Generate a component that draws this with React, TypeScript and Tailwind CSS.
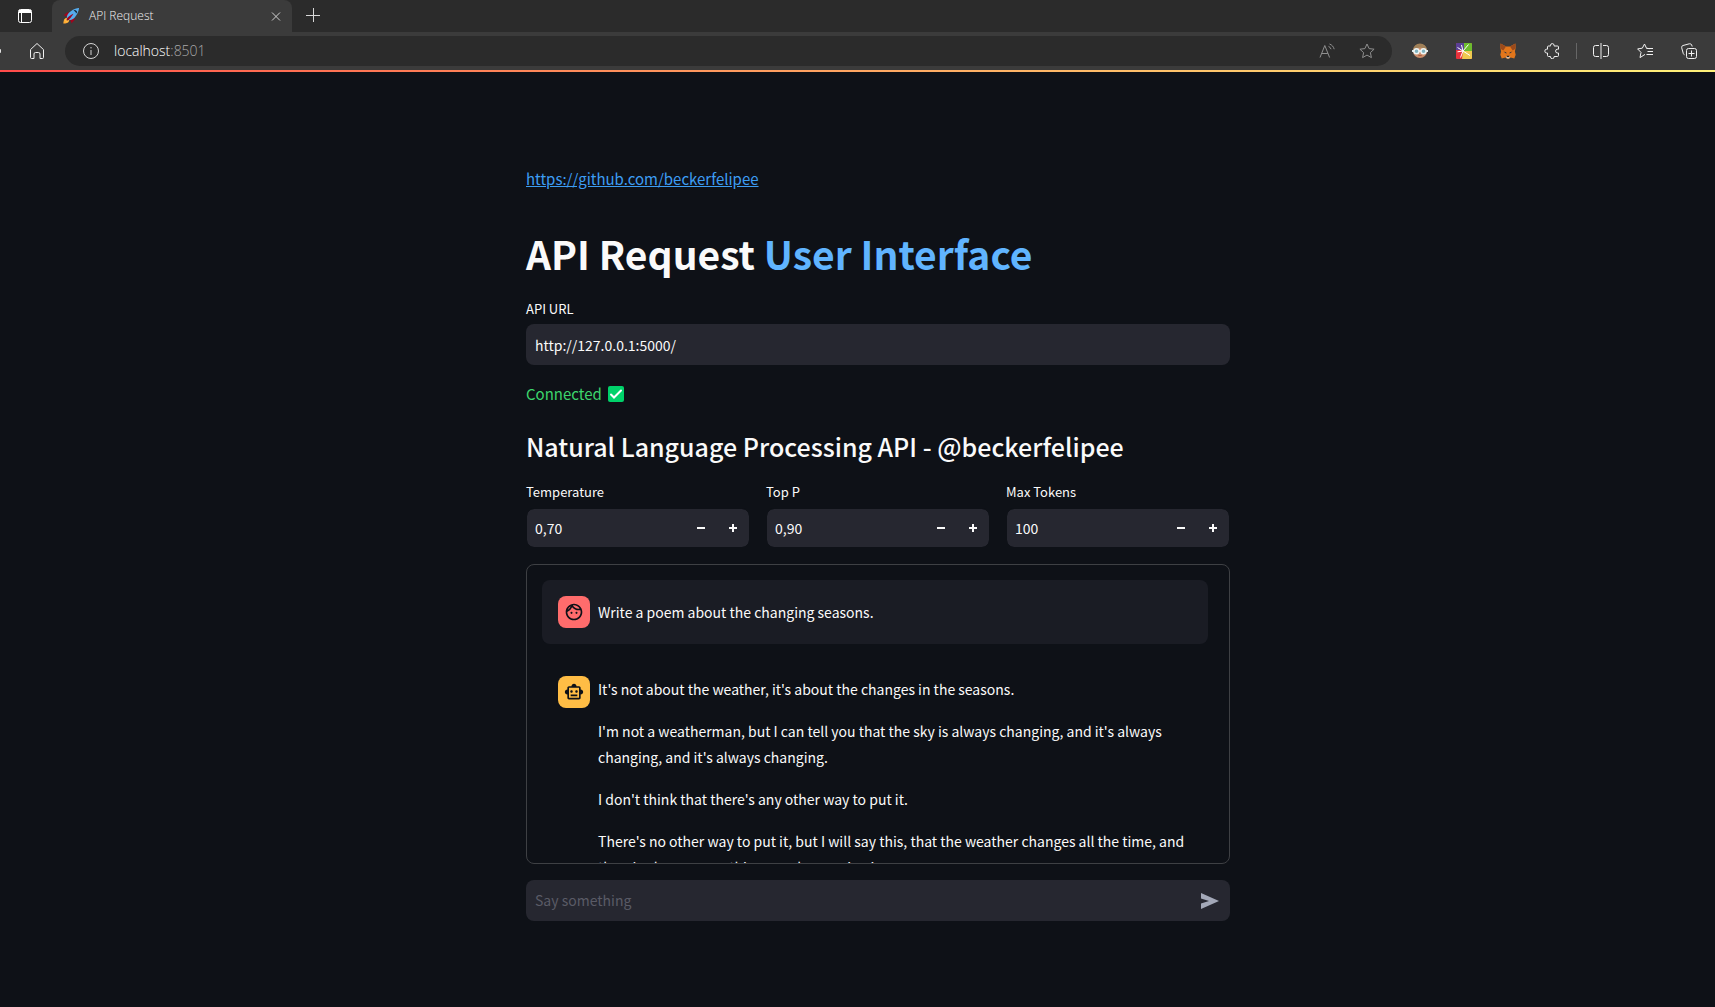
import { useState, type ReactNode } from "react";
import { MdOutlineFace, MdOutlineSmartToy } from "react-icons/md";

function IconButton({
  label,
  className = "",
  onClick,
  submit = false,
  children,
}: {
  label: string;
  className?: string;
  onClick?: () => void;
  submit?: boolean;
  children: ReactNode;
}) {
  return (
    <button
      type={submit ? "submit" : "button"}
      aria-label={label}
      onClick={onClick}
      className={"flex shrink-0 items-center justify-center " + className}
    >
      {children}
    </button>
  );
}

function Rocket() {
  return (
    <svg width="16" height="16" viewBox="0 0 36 36" aria-hidden="true">
      <path fill="#A0041E" d="M1 17l8-7 16 1 1 16-7 8s.001-5.999-6-12-12-6-12-6z" />
      <path fill="#FFAC33" d="M.973 35s-.036-7.979 2.985-11S15 21.187 15 21.187 14.999 29 11.999 32c-3 3-11.026 3-11.026 3z" />
      <circle fill="#FFCC4D" cx="8.999" cy="27" r="4" />
      <path fill="#55ACEE" d="M35.999 0s-10 0-22 10c-6 5-6 14-4 16s11 2 16-4c10-12 10-22 10-22z" />
      <path d="M26.999 5c-1.623 0-3.013.971-3.641 2.36.502-.227 1.055-.36 1.641-.36 2.209 0 4 1.791 4 4 0 .586-.133 1.139-.359 1.64 1.389-.627 2.359-2.017 2.359-3.64 0-2.209-1.791-4-4-4z" />
      <path fill="#A0041E" d="M8 28s0-4 1-5 13.001-10.999 14-10-9.001 13-10.001 14S8 28 8 28z" />
    </svg>
  );
}

function TabStrip() {
  return (
    <div className="flex h-8 items-stretch bg-[#2b2b2b]">
      <IconButton label="Tab actions menu" className="w-[52px] pr-0.5 text-white">
        <svg width="16" height="16" viewBox="0 0 16 16" fill="none" stroke="currentColor">
          <rect x="1.5" y="1.5" width="13" height="13" rx="2" />
          <path d="M2 2.5h12M2 3.5h12M2 4.5h12M4.5 5v9" />
        </svg>
      </IconButton>
      <div className="flex w-60 items-center rounded-t-lg bg-[#3b3b3b] pl-[11px] pr-2">
        <Rocket />
        <span className="ml-[10px] flex-1 font-['Open_Sans',sans-serif] text-xs font-light text-[#f0f0f0]">API Request</span>
        <IconButton label="Close tab" className="text-[#d0d0d0]">
          <svg width="16" height="16" viewBox="0 0 16 16" stroke="currentColor">
            <path d="M4 4.5l8 8M12 4.5l-8 8" />
          </svg>
        </IconButton>
      </div>
      <IconButton label="New tab" className="ml-[13px] text-[#d8d8d8]">
        <svg width="16" height="16" viewBox="0 0 16 16" stroke="currentColor">
          <path d="M1 7.5h14M8.5 0v14" />
        </svg>
      </IconButton>
    </div>
  );
}

function AddressBar() {
  return (
    <div className="flex h-[30px] min-w-0 flex-1 items-center rounded-full bg-[#2b2b2b] px-[17px] text-[#8f8f8f]">
      <IconButton label="Site information" className="text-[#d6d6d6]">
        <svg width="18" height="18" viewBox="0 0 18 18" fill="none" stroke="currentColor">
          <circle cx="9" cy="9" r="7.5" />
          <path d="M9 8v5M9 5v1.4" />
        </svg>
      </IconButton>
      <div className="flex min-w-0 flex-1 items-center pl-[14px] font-['Open_Sans',sans-serif] text-sm font-light">
        <span className="text-white">localhost</span>
        <span className="text-[#a8a8a8]">:8501</span>
      </div>
      <IconButton label="Read aloud">
        <svg width="16" height="16" viewBox="0 0 16 16" fill="none" stroke="currentColor">
          <path d="M1 14.500L5.800 2.500l4.800 12M2.700 10.500h6.200" />
          <path d="M9.500 3.400c1.300.5 2.100 1.400 2.500 2.800M10.500 1c2.300.8 4 2.500 4.700 5.200" />
        </svg>
      </IconButton>
      <IconButton label="Add to favorites" className="ml-6">
        <svg width="16" height="16" viewBox="0 0 16 16" fill="none" stroke="currentColor" strokeLinejoin="round">
          <path d="M8 1l2.100 4.600 5 .6-3.700 3.400 1 5L8 12.100l-4.400 2.500 1-5L.9 6.200l5-.6z" />
        </svg>
      </IconButton>
    </div>
  );
}

function GlassesFace() {
  return (
    <svg width="16" height="16" viewBox="0 0 16 16" aria-hidden="true">
      <circle cx="8" cy="8" r="7" fill="#c98d6b" />
      <path d="M1 7.500a7 7 0 0 1 14 0L12 5.200 8 4.600 3.600 5.400z" fill="#a08058" />
      <path d="M0 7h16v2H0z" fill="#dfe9ea" />
      <circle cx="4.500" cy="8.300" r="2.500" fill="#7fb3c0" stroke="#eef4f4" strokeWidth="1.400" />
      <circle cx="11.500" cy="8.300" r="2.500" fill="#7fb3c0" stroke="#eef4f4" strokeWidth="1.400" />
      <path d="M6.300 12.600h3.400" stroke="#a8553f" />
    </svg>
  );
}

function Pinwheel() {
  return (
    <svg width="16" height="16" viewBox="0 0 16 16" aria-hidden="true">
      <rect width="16" height="16" rx="1" fill="#e8323c" />
      <path d="M0 1q0-1 1-1h7v7H0z" fill="#5b3f96" />
      <path d="M8 0h7q1 0 1 1v7H8z" fill="#6dbb2e" />
      <path d="M7 8h9v7q0 1-1 1H6z" fill="#efc94f" />
      <path d="M7 8L12.500 1.500M7 8L5.500 2M7 8L1.500 4.500M7 8l-5.500.8M7 8L4.500 14.500M7 8l7 4.500" stroke="#fff" />
    </svg>
  );
}

function Fox() {
  return (
    <svg width="16" height="16" viewBox="0 0 16 16" aria-hidden="true">
      <path d="M.6.6L6 3.600h4L15.400.6 15.600 5l-.7 3.400.8 3.400-1.400 3.600-3.600-1L9 15.700H7L5.300 14.400l-3.600 1L.3 11.800 1.100 8.400.4 5z" fill="#e2761b" />
      <path d="M.6.6L6 3.600 3.300 7.400.5 5.800zM15.400.6L10 3.600l2.700 3.800 2.800-1.600z" fill="#9a4a1c" />
      <path d="M3.400 8.600l2.800.6.3 1.500zM12.600 8.600l-2.800.6-.3 1.500z" fill="#2c3440" />
      <path d="M5.600 13.400h4.800L9 15.600H7z" fill="#cbbdb0" />
      <path d="M6.600 12.700h2.800l-.5 1.300H7.100z" fill="#2b2523" />
    </svg>
  );
}

function Toolbar() {
  return (
    <div className="flex h-[38px] items-center bg-[#3b3b3b] pr-1 text-[#f0f0f0]">
      <div className="h-1 w-px rounded-r bg-[#e0e0e0]" />
      <IconButton label="Home" className="ml-7 mr-5">
        <svg width="16" height="18" viewBox="0 0 16 18" fill="none" stroke="currentColor" strokeLinejoin="round">
          <path d="M1.500 7.600L8 1.500l6.500 6.100V15.500q0 1-1 1h-2.500v-4.500q0-1.500-1.500-1.500h-3q-1.500 0-1.500 1.500v4.500H2.500q-1 0-1-1z" />
        </svg>
      </IconButton>
      <AddressBar />
      <div className="ml-1.5 flex items-center">
        <IconButton label="Glasses extension" className="w-11"><GlassesFace /></IconButton>
        <IconButton label="Pinwheel extension" className="w-11"><Pinwheel /></IconButton>
        <IconButton label="Fox extension" className="w-11"><Fox /></IconButton>
        <IconButton label="Extensions" className="w-11">
          <svg width="16" height="16" viewBox="0 0 16 16" fill="none" stroke="currentColor" strokeLinejoin="round">
            <path d="M4.500 3H6.500V2.400a1.800 1.800 0 0 1 3.600 0V3H13.500q1 0 1 1V6.200h-1a1.900 1.900 0 0 0 0 3.800h1v2.500q0 1-1 1H10.100v.4a1.800 1.800 0 0 1-3.600 0v-.4H4.500q-1 0-1-1V10H2.700a1.900 1.900 0 0 1 0-3.800h.8V4q0-1 1-1z" />
          </svg>
        </IconButton>
        <div className="mx-0.5 h-4 w-px bg-[#666]" />
        <IconButton label="Split screen" className="w-11">
          <svg width="16" height="16" viewBox="0 0 16 16" fill="none" stroke="currentColor">
            <path d="M6 2.500H2.500q-2 0-2 2v7q0 2 2 2H6M10 2.500h3.500q2 0 2 2v7q0 2-2 2H10" />
            <path d="M8 0v16" />
          </svg>
        </IconButton>
        <IconButton label="Favorites" className="w-11">
          <svg width="16" height="16" viewBox="0 0 16 16" fill="none" stroke="currentColor" strokeLinejoin="round">
            <path d="M8 11.400L3 14.600l1-5.200L.6 5.900l4.700-.7L7.500 1l2 4.200 3 .5" />
            <path d="M9.500 5.500H16M10.500 8.500H16M9.500 11.500H16" />
          </svg>
        </IconButton>
        <IconButton label="Collections" className="w-11">
          <svg width="16" height="16" viewBox="0 0 16 16" fill="none" stroke="currentColor" strokeLinejoin="round">
            <rect x="5.500" y="5.500" width="10" height="10" rx="2" />
            <path d="M10.500 7.500v6M7.500 10.500h6M3.500 11.800Q2.600 11.500 2.300 10.600L.7 4.800Q.3 3 2 2.500L8.300.8q1.700-.4 2.400 1.200l.5 1.500" />
          </svg>
        </IconButton>
      </div>
    </div>
  );
}

function NumberField({ id, label, initial, step, digits }: { id: string; label: string; initial: number; step: number; digits: number }) {
  const [value, setValue] = useState(initial);
  return (
    <div>
      <label htmlFor={id} className="block text-[13px] leading-5">{label}</label>
      <div className="mt-1.5 flex h-10 rounded-lg border border-[#0e1117] bg-[#262730] bg-clip-padding">
        <input
          id={id}
          inputMode="decimal"
          readOnly
          value={value.toFixed(digits).replace(".", ",")}
          className="min-w-0 flex-1 bg-transparent px-2 text-[14px] outline-none"
        />
        <IconButton label={"Decrease " + label} className="w-8" onClick={() => setValue(Math.max(0, value - step))}>
          <svg width="8" height="8" viewBox="0 0 8 8" fill="currentColor"><path d="M0 3h8v2H0z" /></svg>
        </IconButton>
        <IconButton label={"Increase " + label} className="w-8" onClick={() => setValue(value + step)}>
          <svg width="8" height="8" viewBox="0 0 8 8" fill="currentColor"><path d="M3 0h2v3h3v2H5v3H3V5H0V3h3z" /></svg>
        </IconButton>
      </div>
    </div>
  );
}

const reply = [
  "It's not about the weather, it's about the changes in the seasons.",
  "I'm not a weatherman, but I can tell you that the sky is always changing, and it's always changing, and it's always changing.",
  "I don't think that there's any other way to put it.",
  "There's no other way to put it, but I will say this, that the weather changes all the time, and there's always something new happening in.",
];

function ChatLog() {
  return (
    <section
      aria-label="Conversation"
      className="mt-4 h-[300px] overflow-y-auto rounded-lg border border-[#3e4044] py-[15px] pl-[15px] pr-[21px] text-[14px] leading-[26px] [scrollbar-width:none]"
    >
      <div className="flex items-start gap-2 rounded-lg bg-[#1a1c24] p-4">
        <div className="flex size-8 shrink-0 items-center justify-center rounded-lg bg-[#ff6c6c] text-[#0e1117]">
          <MdOutlineFace size={20} />
        </div>
        <p className="min-w-0 flex-1 py-[3px]">Write a poem about the changing seasons.</p>
      </div>
      <div className="mt-4 flex items-start gap-2 py-4 pl-4">
        <div className="flex size-8 shrink-0 items-center justify-center rounded-lg bg-[#ffbd45] text-[#0e1117]">
          <MdOutlineSmartToy size={20} />
        </div>
        <div className="flex min-w-0 flex-1 flex-col gap-4">
          {reply.map((text) => (
            <p key={text}>{text}</p>
          ))}
        </div>
      </div>
    </section>
  );
}

export default function App() {
  const [url, setUrl] = useState("http://127.0.0.1:5000/");
  return (
    <div className="min-h-screen bg-[#0e1117] font-['Noto_Sans_CJK_SC',sans-serif] text-[#fafafa]">
      <header>
        <TabStrip />
        <Toolbar />
        <div className="h-0.5 bg-linear-to-r from-[#ff4b4b] to-[#fff27a]" />
      </header>
      <div className="pl-[41px]">
        <main className="mx-auto max-w-[736px] px-4 pt-[94px]">
          <div className="text-[15px] leading-[26px]">
            <a href="https://github.com/beckerfelipee" className="text-[#3d9df3] underline">https://github.com/beckerfelipee</a>
          </div>
          <h1 className="mt-[34px] text-[39px] leading-[54px] font-bold">
            API Request <span className="text-[#60b4ff]">User Interface</span>
          </h1>
          <label htmlFor="api-url" className="mt-[19px] block text-[13px] leading-5">API URL</label>
          <input
            id="api-url"
            value={url}
            onChange={(e) => setUrl(e.target.value)}
            className="mt-[5px] block h-[41px] w-full rounded-lg bg-[#262730] px-[9px] text-[14px] outline-none"
          />
          <p className="mt-4 flex items-center gap-1.5 text-[15px] leading-[26px] text-[#3dd56d]">
            Connected
            <svg width="16" height="16" viewBox="0 0 16 16" aria-label="check" role="img">
              <rect width="16" height="16" rx="2" fill="#00d26a" />
              <path d="M3 8.500l3 3 7-7" fill="none" stroke="#fff" strokeWidth="2" strokeLinecap="round" />
            </svg>
          </p>
          <h2 className="mt-[22px] text-[25px] leading-[34px] font-medium">Natural Language Processing API - @beckerfelipee</h2>
          <div className="mt-[19px] grid grid-cols-3 gap-4">
            <NumberField id="temperature" label="Temperature" initial={0.7} step={0.01} digits={2} />
            <NumberField id="top-p" label="Top P" initial={0.9} step={0.01} digits={2} />
            <NumberField id="max-tokens" label="Max Tokens" initial={100} step={1} digits={0} />
          </div>
          <ChatLog />
          <form className="mt-4 flex h-[41px] items-center rounded-lg bg-[#262730] pl-[9px]" onSubmit={(e) => e.preventDefault()}>
            <input
              aria-label="Say something"
              placeholder="Say something"
              className="min-w-0 flex-1 bg-transparent text-[14px] outline-none placeholder:text-[#5a5b66]"
            />
            <IconButton label="Send message" submit className="w-10 text-[#a3a8b8]">
              <svg width="18" height="16" viewBox="0 0 18 16" fill="currentColor">
                <path d="M0 0l18 8-18 8v-5.500L8 8 0 5.500z" />
              </svg>
            </IconButton>
          </form>
        </main>
      </div>
    </div>
  );
}
